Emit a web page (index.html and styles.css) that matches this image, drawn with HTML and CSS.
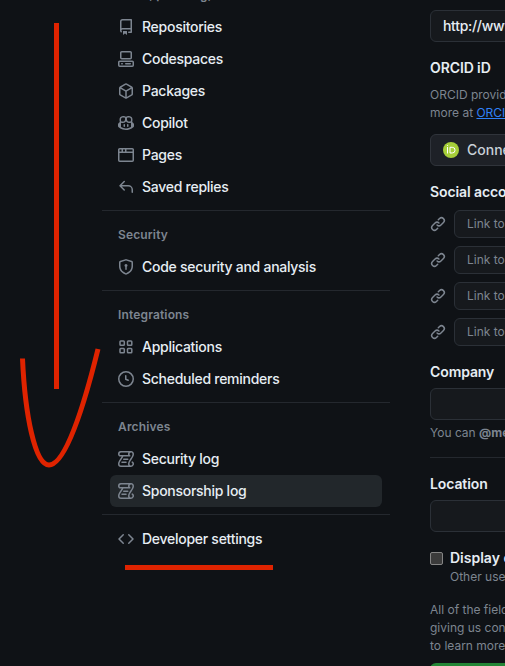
FILE: index.html
```html
<!DOCTYPE html>
<html lang="en">
<head>
<meta charset="utf-8">
<title>Settings</title>
<link rel="stylesheet" href="styles.css">
</head>
<body>
<svg class="defs" width="0" height="0">
<symbol id="log" viewBox="0 0 16 16"><path d="M5 8.250a.75.75 0 0 1 .75-.75h4a.75.75 0 0 1 0 1.500h-4A.75.75 0 0 1 5 8.250ZM4 10.500A.75.75 0 0 0 4 12h4a.75.75 0 0 0 0-1.500H4Z"/><path d="M13-.005c1.654 0 3 1.328 3 3 0 .982-.338 1.933-.783 2.818-.443.879-1.028 1.758-1.582 2.588l-.011.017c-.568.853-1.104 1.659-1.501 2.446-.398.789-.623 1.494-.623 2.136a1.500 1.500 0 1 0 2.333-1.248.75.75 0 0 1 .834-1.246A3 3 0 0 1 13 16H3a3 3 0 0 1-3-3c0-1.582.891-3.135 1.777-4.506.209-.322.418-.637.623-.946.473-.709.923-1.386 1.287-2.048H2.510c-.576 0-1.381-.133-1.907-.783A2.680 2.680 0 0 1 0 2.995a3 3 0 0 1 3-3Zm0 1.500a1.500 1.500 0 0 0-1.500 1.500c0 .476.223.834.667 1.132A.75.75 0 0 1 11.750 5.500H5.368c-.467 1.003-1.141 2.015-1.773 2.963-.192.289-.381.571-.558.845C2.130 10.711 1.500 11.916 1.500 13A1.500 1.500 0 0 0 3 14.500h7.401A2.989 2.989 0 0 1 10 13c0-.979.338-1.928.784-2.812.441-.874 1.023-1.748 1.575-2.576l.017-.026c.568-.853 1.103-1.658 1.501-2.448.398-.79.623-1.497.623-2.143 0-.838-.669-1.500-1.500-1.500Zm-10 0a1.500 1.500 0 0 0-1.500 1.500c0 .321.1.569.27.778.097.12.325.227.74.227h7.674A2.737 2.737 0 0 1 10 2.995c0-.546.146-1.059.401-1.500Z"/></symbol>
<symbol id="link" viewBox="0 0 16 16"><path d="m7.775 3.275 1.250-1.250a3.500 3.500 0 1 1 4.950 4.950l-2.500 2.500a3.500 3.500 0 0 1-4.950 0 .751.751 0 0 1 .018-1.042.751.751 0 0 1 1.042-.018 1.998 1.998 0 0 0 2.830 0l2.500-2.500a2.002 2.002 0 0 0-2.830-2.830l-1.250 1.250a.751.751 0 0 1-1.042-.018.751.751 0 0 1-.018-1.042Zm-4.690 9.640a1.998 1.998 0 0 0 2.830 0l1.250-1.250a.751.751 0 0 1 1.042.018.751.751 0 0 1 .018 1.042l-1.250 1.250a3.500 3.500 0 1 1-4.950-4.950l2.500-2.500a3.500 3.500 0 0 1 4.950 0 .751.751 0 0 1-.018 1.042.751.751 0 0 1-1.042.018 1.998 1.998 0 0 0-2.830 0l-2.500 2.500a1.998 1.998 0 0 0 0 2.830Z"/></symbol>
</svg>
<div class="page">
<nav class="sidebar">
<h3 class="group first">Code, planning, and automation</h3>
<a class="item"><svg viewBox="0 0 16 16"><path d="M2 2.500A2.500 2.500 0 0 1 4.500 0h8.750a.75.75 0 0 1 .75.75v12.500a.75.75 0 0 1-.75.75h-2.500a.75.75 0 0 1 0-1.500h1.750v-2h-8a1 1 0 0 0-.714 1.700.75.75 0 1 1-1.072 1.050A2.495 2.495 0 0 1 2 11.500Zm10.500-1h-8a1 1 0 0 0-1 1v6.708A2.486 2.486 0 0 1 4.500 9h8ZM5 12.250a.25.25 0 0 1 .25-.25h3.500a.25.25 0 0 1 .25.25v3.250a.25.25 0 0 1-.4.200l-1.450-1.087a.249.249 0 0 0-.3 0L5.400 15.700a.25.25 0 0 1-.4-.2Z"/></svg><span>Repositories</span></a>
<a class="item"><svg viewBox="0 0 16 16"><path d="M0 11.250c0-.966.784-1.750 1.750-1.750h12.500c.966 0 1.750.784 1.750 1.750v3A1.750 1.750 0 0 1 14.250 16H1.750A1.750 1.750 0 0 1 0 14.250Zm2-9.500C2 .784 2.784 0 3.750 0h8.500C13.216 0 14 .784 14 1.750v5a1.750 1.750 0 0 1-1.750 1.750h-8.500A1.750 1.750 0 0 1 2 6.750Zm1.750-.25a.25.25 0 0 0-.25.250v5c0 .138.112.25.250.250h8.500a.25.25 0 0 0 .25-.25v-5a.25.25 0 0 0-.25-.25Zm-2 9.500a.25.25 0 0 0-.25.250v3c0 .138.112.25.250.250h12.500a.25.25 0 0 0 .25-.25v-3a.25.25 0 0 0-.25-.25Z"/><path d="M7 12.750a.75.75 0 0 1 .75-.75h4.500a.75.75 0 0 1 0 1.500h-4.500a.75.75 0 0 1-.75-.75Zm-4 0a.75.75 0 0 1 .75-.75h.5a.75.75 0 0 1 0 1.500h-.5a.75.75 0 0 1-.75-.75Z"/></svg><span>Codespaces</span></a>
<a class="item"><svg viewBox="0 0 16 16"><path d="m8.878.392 5.250 3.045c.54.314.872.890.872 1.514v6.098a1.750 1.750 0 0 1-.872 1.514l-5.250 3.045a1.750 1.750 0 0 1-1.756 0l-5.250-3.045A1.750 1.750 0 0 1 1 11.049V4.951c0-.624.332-1.201.872-1.514L7.122.392a1.750 1.750 0 0 1 1.756 0ZM7.875 1.690l-4.630 2.685L8 7.133l4.755-2.758-4.630-2.685a.248.248 0 0 0-.25 0ZM2.500 5.677v5.372c0 .090.047.171.125.216l4.625 2.683V8.432Zm6.250 8.271 4.625-2.683a.25.25 0 0 0 .125-.216V5.677L8.750 8.432Z"/></svg><span>Packages</span></a>
<a class="item"><svg viewBox="0 0 16 16"><path d="M7.998 15.035c-4.562 0-7.873-2.914-7.998-3.749V9.338c.085-.628.677-1.686 1.588-2.065.013-.070.024-.143.036-.218.029-.183.060-.384.126-.612-.201-.508-.254-1.084-.254-1.656 0-.870.128-1.769.693-2.484.579-.733 1.494-1.124 2.724-1.261 1.206-.134 2.262.034 2.944.765.050.053.096.108.139.165.044-.057.094-.112.143-.165.682-.731 1.738-.899 2.944-.765 1.230.137 2.145.528 2.724 1.261.566.715.693 1.614.693 2.484 0 .572-.053 1.148-.254 1.656.066.228.098.429.126.612.012.076.024.148.037.218.924.385 1.522 1.471 1.591 2.095v1.872c0 .766-3.351 3.795-8.002 3.795Zm0-1.485c2.280 0 4.584-1.110 5.002-1.433V7.862l-.023-.116c-.490.210-1.075.291-1.727.291-1.146 0-2.059-.327-2.710-.991A3.222 3.222 0 0 1 8 6.303a3.240 3.240 0 0 1-.544.743c-.650.664-1.563.991-2.710.991-.652 0-1.236-.081-1.727-.291l-.023.116v4.255c.419.323 2.722 1.433 5.002 1.433ZM6.762 2.830c-.193-.206-.637-.413-1.682-.297-1.019.113-1.479.404-1.713.700-.247.312-.369.789-.369 1.554 0 .793.129 1.171.308 1.371.162.181.519.379 1.442.379.853 0 1.339-.235 1.638-.540.315-.322.527-.827.617-1.553.117-.935-.037-1.395-.241-1.614Zm4.155-.297c-1.044-.116-1.488.091-1.681.297-.204.219-.359.679-.242 1.614.091.726.303 1.231.618 1.553.299.305.784.540 1.638.540.922 0 1.280-.198 1.442-.379.179-.200.308-.578.308-1.371 0-.765-.123-1.242-.370-1.554-.233-.296-.693-.587-1.713-.700Z"/><path d="M6.250 9.037a.75.75 0 0 1 .75.750v1.501a.75.75 0 0 1-1.500 0V9.787a.75.75 0 0 1 .75-.75Zm4.250.750v1.501a.75.75 0 0 1-1.500 0V9.787a.75.75 0 0 1 1.500 0Z"/></svg><span>Copilot</span></a>
<a class="item"><svg viewBox="0 0 16 16"><path d="M0 2.750C0 1.784.784 1 1.750 1h12.500c.966 0 1.750.784 1.750 1.750v10.500A1.750 1.750 0 0 1 14.250 15H1.750A1.750 1.750 0 0 1 0 13.250ZM14.500 6h-13v7.250c0 .138.112.25.250.250h12.500a.25.25 0 0 0 .25-.25Zm-6-3.500v2h6V2.750a.25.25 0 0 0-.25-.25ZM5 2.500v2h2v-2Zm-3.250 0a.25.25 0 0 0-.25.250V4.500h2v-2Z"/></svg><span>Pages</span></a>
<a class="item"><svg viewBox="0 0 16 16"><path d="M6.780 1.970a.75.75 0 0 1 0 1.060L3.810 6h6.440A4.750 4.750 0 0 1 15 10.750v2.500a.75.75 0 0 1-1.500 0v-2.500a3.250 3.250 0 0 0-3.250-3.250H3.810l2.970 2.970a.751.751 0 0 1-1.060 1.060L1.470 7.280a.75.75 0 0 1 0-1.060l4.250-4.250a.75.75 0 0 1 1.060 0Z"/></svg><span>Saved replies</span></a>
<hr>
<h3 class="group">Security</h3>
<a class="item"><svg viewBox="0 0 16 16"><path d="m8.533.133 5.250 1.680A1.750 1.750 0 0 1 15 3.480V7c0 1.566-.320 3.182-1.303 4.682-.983 1.498-2.585 2.813-5.032 3.855a1.697 1.697 0 0 1-1.330 0c-2.447-1.042-4.049-2.357-5.032-3.855C1.320 10.182 1 8.566 1 7V3.480a1.750 1.750 0 0 1 1.217-1.667l5.250-1.680a1.748 1.748 0 0 1 1.066 0Zm-.61 1.429-5.250 1.680a.250.250 0 0 0-.173.238V7c0 1.358.275 2.666 1.057 3.859.784 1.194 2.121 2.342 4.366 3.298a.196.196 0 0 0 .154 0c2.245-.957 3.582-2.103 4.366-3.297C13.225 9.666 13.500 8.358 13.500 7V3.480a.250.250 0 0 0-.174-.238l-5.250-1.680a.250.250 0 0 0-.153 0ZM9.500 6.500c0 .536-.286 1.032-.75 1.300v2.450a.75.75 0 0 1-1.500 0V7.800A1.500 1.500 0 1 1 9.500 6.500Z"/></svg><span>Code security and analysis</span></a>
<hr>
<h3 class="group">Integrations</h3>
<a class="item"><svg viewBox="0 0 16 16" class="line"><rect x="2" y="2" width="4.300" height="4.300" rx=".8"/><rect x="9.500" y="2" width="4.300" height="4.300" rx=".8"/><rect x="2" y="9.500" width="4.300" height="4.300" rx=".8"/><rect x="9.500" y="9.500" width="4.300" height="4.300" rx=".8"/></svg><span>Applications</span></a>
<a class="item"><svg viewBox="0 0 16 16"><path d="M8 0a8 8 0 1 1 0 16A8 8 0 0 1 8 0ZM1.500 8a6.500 6.500 0 1 0 13 0 6.500 6.500 0 0 0-13 0Zm7-3.250v2.992l2.028.812a.75.75 0 0 1-.557 1.392l-2.500-1A.751.751 0 0 1 7 8.250v-3.500a.75.75 0 0 1 1.500 0Z"/></svg><span>Scheduled reminders</span></a>
<hr>
<h3 class="group">Archives</h3>
<a class="item"><svg><use href="#log"/></svg><span>Security log</span></a>
<a class="item active"><svg><use href="#log"/></svg><span>Sponsorship log</span></a>
<hr>
<a class="item"><svg viewBox="0 0 16 16"><path d="m11.280 3.220 4.250 4.250a.75.75 0 0 1 0 1.060l-4.250 4.250a.751.751 0 0 1-1.060-1.060L13.940 8l-3.720-3.720a.751.751 0 0 1 1.060-1.060Zm-6.560 0a.751.751 0 0 1 1.060 1.060L2.060 8l3.720 3.720a.751.751 0 0 1-1.060 1.060L.470 8.530a.75.75 0 0 1 0-1.060Z"/></svg><span>Developer settings</span></a>
</nav>
<main class="form">
<div class="input url">http://www.example.com</div>
<h4 class="label">ORCID iD</h4>
<p class="note orcid">ORCID provides a persistent identifier. Learn<br>more at <a>ORCID.org</a>.</p>
<div class="connect"><svg viewBox="0 0 16 16"><circle cx="8" cy="8" r="8" fill="#a6ce39"/><path d="M4.500 5v6.500M7 5.300h2.200a2.800 2.800 0 0 1 0 5.700H7Z" fill="none" stroke="#fff"/><circle cx="4.500" cy="3.500" r=".6" fill="#fff"/></svg><span>Connect your ORCID iD</span></div>
<h4 class="label social">Social accounts</h4>
<div class="links">
<div class="row"><svg><use href="#link"/></svg><div class="input small">Link to social profile</div></div>
<div class="row"><svg><use href="#link"/></svg><div class="input small">Link to social profile</div></div>
<div class="row"><svg><use href="#link"/></svg><div class="input small">Link to social profile</div></div>
<div class="row"><svg><use href="#link"/></svg><div class="input small">Link to social profile</div></div>
</div>
<h4 class="label company">Company</h4>
<div class="input"></div>
<p class="note mention">You can <b>@mention</b> your company</p>
<div class="rule"></div>
<h4 class="label">Location</h4>
<div class="input"></div>
<div class="check"><i class="box"></i><b>Display current local time</b></div>
<p class="note other">Other users will see the time difference</p>
<p class="note terms">All of the fields on this page are optional<br>giving us consent to share this data<br>to learn more about how we use it</p>
<div class="save"></div>
</main>
</div>
<svg class="marks" width="505" height="666" viewBox="0 0 505 666"><path d="M56.500 23V389M125 567.500H273M22.500 358.500C25 415 35 465 49 465C65 465 83 410 98 349"/></svg>
</body>
</html>
```
FILE: styles.css
```css
* { box-sizing: border-box; }
body { margin: 0; background: #0f1216; color: #e6edf3; font: 14px/20px Inter, sans-serif; }
h3, h4, p { margin: 0; }
svg { fill: currentColor; }
.defs { position: absolute; }
.page { display: flex; width: 505px; height: 666px; overflow: hidden; padding-left: 102px; }
.sidebar { width: 288px; flex: none; }
.group { height: 32px; padding: 6px 16px; font-size: 12px; line-height: 20px; font-weight: 600; letter-spacing: .15px; color: #7d8590; }
.group.first { display: flex; align-items: flex-end; height: 11px; padding-top: 0; overflow: hidden; white-space: nowrap; }
.item { display: flex; align-items: center; height: 32px; margin: 0 8px; padding: 0 8px; gap: 8px; border-radius: 6px; white-space: nowrap; font-weight: 450; letter-spacing: -.27px; }
.item svg { width: 16px; height: 16px; flex: none; color: #7d8590; }
.item .line { fill: none; stroke: currentColor; stroke-width: 1.5; }
.active { background: #22272b; }
hr { height: 1px; border: 0; margin: 7px 0 8px; background: #24282e; }
.form { width: 300px; flex: none; margin-left: 40px; white-space: nowrap; }
.input { height: 32px; padding: 5px 12px; border: 1px solid #2b3037; border-radius: 6px; background: #16191d; }
.url { margin-top: 10px; font-weight: 450; letter-spacing: -.3px; }
.label { font-size: 14px; line-height: 20px; font-weight: 600; letter-spacing: -.1px; margin: 16px 0 6px; }
.note { font-size: 12px; line-height: 18px; color: #7d8590; }
.orcid { margin-top: 8px; }
.note a { color: #2f81f7; text-decoration: underline; }
.connect { display: flex; align-items: center; gap: 8px; height: 32px; margin-top: 12px; padding: 0 12px; border: 1px solid #30343b; border-radius: 6px; background: #1e2127; color: #c9d1d9; font-weight: 500; }
.connect svg { width: 16px; height: 16px; }
.links { display: grid; gap: 8px; }
.row { display: flex; align-items: center; gap: 8px; }
.row svg { width: 16px; height: 16px; color: #7d8590; }
.small { height: 28px; flex: 1; font-size: 12px; line-height: 18px; padding: 4px 12px; color: #7d8590; }
.social { margin-bottom: 8px; }
.mention { margin-top: 4px; }
.rule { height: 1px; margin: 15px 0 16px; background: #24282e; }
.check { display: flex; align-items: center; gap: 7px; margin-top: 16px; font-weight: 600; }
.check b { font-weight: 600; }
.box { width: 13px; height: 13px; border: 1px solid #858585; border-radius: 2px; background: #3b3b3b; }
.terms { margin-top: 15px; }
.other { padding-left: 20px; }
.save { height: 32px; margin-top: 8px; border-radius: 6px; background: #238636; }
.marks { position: absolute; left: 0; top: 0; fill: none; stroke: #df2300; stroke-width: 5; }
```
